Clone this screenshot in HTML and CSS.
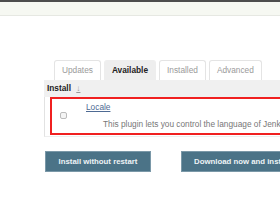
FILE: index.html
```html
<!DOCTYPE html>
<html lang="en">
<head>
    <meta charset="UTF-8">
    <title>Plugin Manager</title>
    <link rel="stylesheet" href="styles.css">
</head>
<body>
    <div id="topbar"></div>
    <div id="main">
        <div class="tabs">
            <div class="tab">Updates</div>
            <div class="tab on">Available</div>
            <div class="tab">Installed</div>
            <div class="tab">Advanced</div>
        </div>
        <div class="thead">
            <span class="th">Install</span>
            <span class="sort">↓</span>
        </div>
        <div class="tbody">
            <div class="mark">
                <span class="chk"></span>
                <div class="info">
                    <a class="name" href="#">Locale</a>
                    <p class="desc">This plugin lets you control the language of Jenkins</p>
                </div>
            </div>
        </div>
        <div class="btns">
            <div class="btn first">Install without restart</div>
            <div class="btn">Download now and install after restart</div>
        </div>
    </div>
</body>
</html>
```

FILE: styles.css
```css
*{margin: 0; padding: 0; box-sizing: border-box;}
body {
    width: 280px;
    height: 210px;
    overflow: hidden;
    font-family: "Liberation Sans", Arial, sans-serif;
    font-size: 8.3px;
    color: #333;
    background: #fff;
}
#topbar {
    height: 16px;
    border-top: 2px solid #4d4d4d;
    border-bottom: 1px solid #e6e8e2;
    background: #f6f8f2;
}
#main {
    padding-left: 44px;
    width: 280px;
    overflow: hidden;
}
.tabs {
    display: flex;
    gap: 3px;
    margin-top: 44px;
    padding-left: 10px;
}
.tab {
    height: 20px;
    line-height: 19px;
    padding: 0 7px;
    border: 1px solid #e4e4e4;
    border-bottom: none;
    border-radius: 3px 3px 0 0;
    color: #9a9a9a;
}
.tab.on {
    background: #eeeeee;
    border-color: #eeeeee;
    color: #222;
    font-weight: bold;
}
.thead {
    height: 17px;
    line-height: 17px;
    background: #f0f0f0;
    padding-left: 3px;
}
.th {
    font-weight: bold;
    color: #222;
}
.sort {
    color: #999;
    margin-left: 3px;
    text-decoration: underline;
}
.tbody {
    height: 40px;
    border-left: 1px solid #e2e2e2;
    border-bottom: 1px solid #eee;
    padding-left: 5px;
}
.mark {
    width: 260px;
    height: 38px;
    border: 2px solid #f02020;
    display: flex;
    align-items: flex-start;
    padding-left: 8px;
}
.chk {
    flex-shrink: 0;
    width: 7px;
    height: 7px;
    margin-top: 13px;
    border: 1px solid #bbb;
    border-radius: 2px;
    background: #f4f4f4;
}
.info {
    margin-left: 19px;
    padding-top: 3px;
}
.name {
    color: #4e6a93;
    text-decoration: underline;
    line-height: 11px;
}
.desc {
    margin-left: 17px;
    margin-top: 6px;
    color: #777;
    white-space: nowrap;
}
.btns {
    display: flex;
    gap: 30px;
    margin-top: 14px;
    padding-left: 1px;
}
.btn {
    flex-shrink: 0;
    height: 21px;
    line-height: 20px;
    background: #4b7387;
    border: 1px solid #7a98a8;
    color: #eef3f6;
    font-weight: bold;
    font-size: 7.8px;
    padding: 0 12px;
    white-space: nowrap;
}
.btn.first {
    width: 106px;
    text-align: center;
    padding: 0;
}
```
